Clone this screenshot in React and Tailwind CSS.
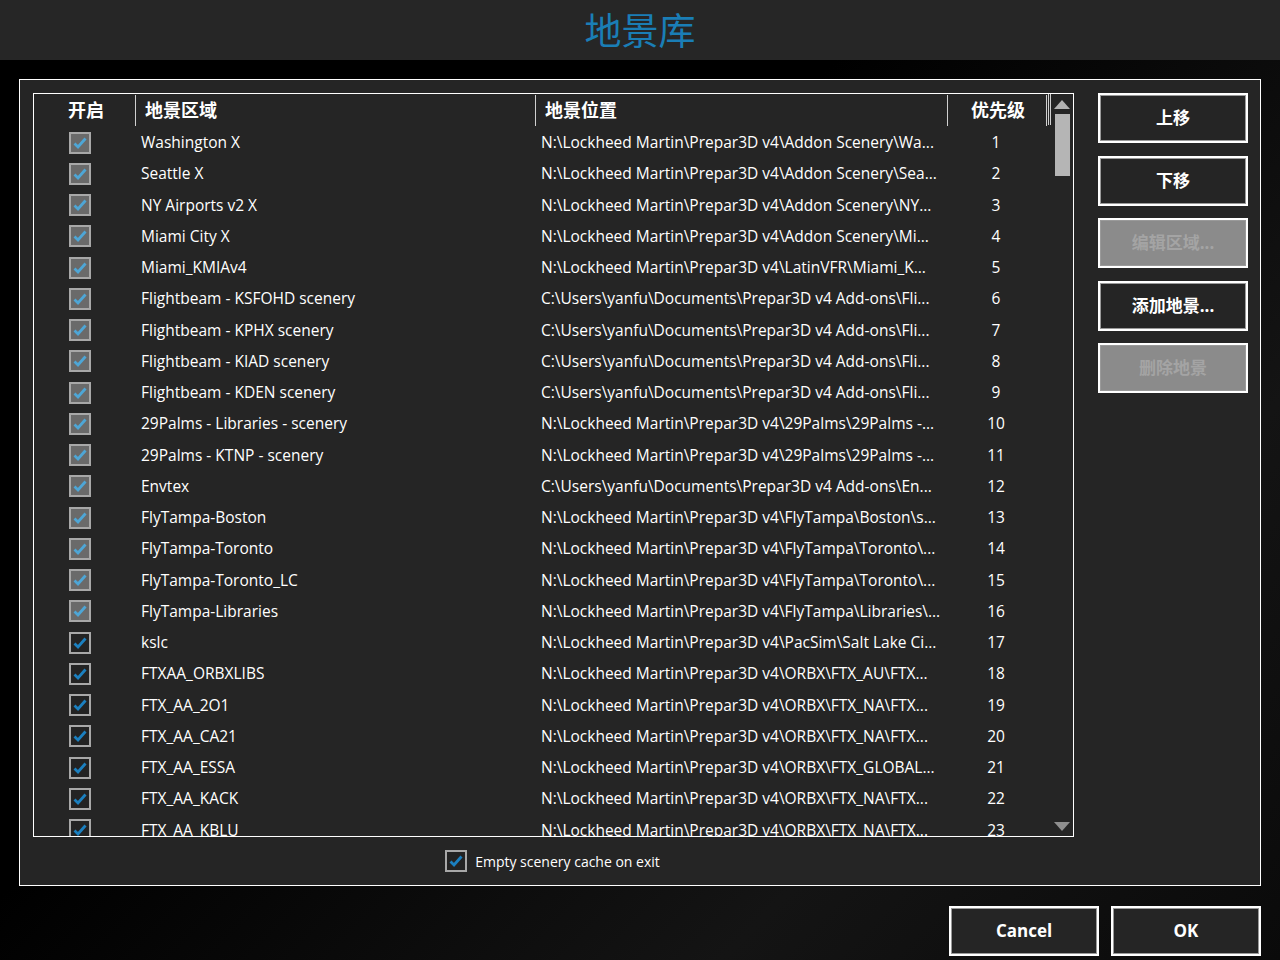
import React from "react";

const rows = [
  ["Washington X", "N:\\Lockheed Martin\\Prepar3D v4\\Addon Scenery\\Wa...", 1, false],
  ["Seattle X", "N:\\Lockheed Martin\\Prepar3D v4\\Addon Scenery\\Sea...", 2, false],
  ["NY Airports v2 X", "N:\\Lockheed Martin\\Prepar3D v4\\Addon Scenery\\NY...", 3, false],
  ["Miami City X", "N:\\Lockheed Martin\\Prepar3D v4\\Addon Scenery\\Mi...", 4, false],
  ["Miami_KMIAv4", "N:\\Lockheed Martin\\Prepar3D v4\\LatinVFR\\Miami_K...", 5, false],
  ["Flightbeam - KSFOHD scenery", "C:\\Users\\yanfu\\Documents\\Prepar3D v4 Add-ons\\Fli...", 6, false],
  ["Flightbeam - KPHX scenery", "C:\\Users\\yanfu\\Documents\\Prepar3D v4 Add-ons\\Fli...", 7, false],
  ["Flightbeam - KIAD scenery", "C:\\Users\\yanfu\\Documents\\Prepar3D v4 Add-ons\\Fli...", 8, false],
  ["Flightbeam - KDEN scenery", "C:\\Users\\yanfu\\Documents\\Prepar3D v4 Add-ons\\Fli...", 9, false],
  ["29Palms - Libraries - scenery", "N:\\Lockheed Martin\\Prepar3D v4\\29Palms\\29Palms -...", 10, false],
  ["29Palms - KTNP - scenery", "N:\\Lockheed Martin\\Prepar3D v4\\29Palms\\29Palms -...", 11, false],
  ["Envtex", "C:\\Users\\yanfu\\Documents\\Prepar3D v4 Add-ons\\En...", 12, false],
  ["FlyTampa-Boston", "N:\\Lockheed Martin\\Prepar3D v4\\FlyTampa\\Boston\\s...", 13, false],
  ["FlyTampa-Toronto", "N:\\Lockheed Martin\\Prepar3D v4\\FlyTampa\\Toronto\\...", 14, false],
  ["FlyTampa-Toronto_LC", "N:\\Lockheed Martin\\Prepar3D v4\\FlyTampa\\Toronto\\...", 15, false],
  ["FlyTampa-Libraries", "N:\\Lockheed Martin\\Prepar3D v4\\FlyTampa\\Libraries\\...", 16, false],
  ["kslc", "N:\\Lockheed Martin\\Prepar3D v4\\PacSim\\Salt Lake Ci...", 17, true],
  ["FTXAA_ORBXLIBS", "N:\\Lockheed Martin\\Prepar3D v4\\ORBX\\FTX_AU\\FTX...", 18, true],
  ["FTX_AA_2O1", "N:\\Lockheed Martin\\Prepar3D v4\\ORBX\\FTX_NA\\FTX...", 19, true],
  ["FTX_AA_CA21", "N:\\Lockheed Martin\\Prepar3D v4\\ORBX\\FTX_NA\\FTX...", 20, true],
  ["FTX_AA_ESSA", "N:\\Lockheed Martin\\Prepar3D v4\\ORBX\\FTX_GLOBAL...", 21, true],
  ["FTX_AA_KACK", "N:\\Lockheed Martin\\Prepar3D v4\\ORBX\\FTX_NA\\FTX...", 22, true],
  ["FTX_AA_KBLU", "N:\\Lockheed Martin\\Prepar3D v4\\ORBX\\FTX_NA\\FTX...", 23, true],
];

const font = { fontFamily: '"Open Sans", "Noto Sans CJK SC", sans-serif' };

function Check({ active }) {
  return (
    <div
      className={
        "w-[22px] h-[22px] border-2 border-[#a8a8a8] flex items-center justify-center " +
        (active ? "bg-[#232323]" : "bg-[#6a6a6a]")
      }
    >
      <svg width="16" height="16" viewBox="0 0 16 16">
        <path
          d="M2.5 8.5 L6 12 L13.5 3.5"
          fill="none"
          stroke={active ? "#1b80c0" : "#4ea6d6"}
          strokeWidth="2.8"
        />
      </svg>
    </div>
  );
}

function SideButton({ label, disabled }) {
  return (
    <div
      className={
        "w-[150px] h-[50px] border-2 border-white shadow-[inset_0_0_0_1px_#9a9a9a] flex items-center justify-center text-[17px] font-bold " +
        (disabled ? "bg-[#8b8b8b] text-[#a4a4a4]" : "bg-[#252525] text-white")
      }
    >
      {label}
    </div>
  );
}

export default function App() {
  return (
    <div
      className="w-[1280px] h-[960px] bg-black bg-[linear-gradient(135deg,#000_0%,#000_40%,#141414_75%,#0a0a0a_100%)] flex flex-col overflow-hidden"
      style={font}
    >
      {/* title bar */}
      <div className="h-[60px] bg-[#262626] flex items-center justify-center">
        <div className="text-[37px] text-[#1a7eb6] leading-none">地景库</div>
      </div>

      <div className="px-[19px] pt-[19px]">
        <div className="h-[807px] border border-white bg-[#252525] pl-[13px] pt-[13px] flex">
          <div className="flex flex-col">
            {/* table */}
            <div className="w-[1041px] h-[746px] border border-white flex overflow-hidden">
              <div className="w-[1014px] flex flex-col overflow-hidden">
                <div className="h-[33px] shrink-0 flex items-center text-white font-bold text-[18px]">
                  <div className="w-[102px] pl-[34px] border-r border-[#d0d0d0] h-[31px] flex items-center">开启</div>
                  <div className="w-[400px] pl-[9px] border-r border-[#d0d0d0] h-[31px] flex items-center">地景区域</div>
                  <div className="w-[412px] pl-[9px] border-r border-[#d0d0d0] h-[31px] flex items-center">地景位置</div>
                  <div className="w-[99px] h-[31px] flex items-center justify-center pl-[2px] border-r border-[#d0d0d0]">优先级</div>
                </div>
                {rows.map(([name, path, n, active]) => (
                  <div key={n} className="h-[31.25px] shrink-0 flex items-center text-white text-[15.5px]">
                    <div className="w-[103px] pl-[35px]">
                      <Check active={active} />
                    </div>
                    <div className="w-[400px] pl-[4px] whitespace-nowrap">{name}</div>
                    <div className="w-[412px] pl-[4px] whitespace-nowrap overflow-hidden">{path}</div>
                    <div className="w-[99px] text-center pr-[5px]">{n}</div>
                  </div>
                ))}
              </div>
              {/* scrollbar */}
              <div className="flex-1 flex">
                <div className="w-[3px] h-[31px] border-l border-r border-[#d0d0d0] shrink-0" />
                <div className="flex-1 flex flex-col items-center pt-[6px] pb-[5px]">
                  <svg width="16" height="9" viewBox="0 0 16 9">
                    <polygon points="0,9 16,9 8,0" fill="#b3b3b3" />
                  </svg>
                  <div className="w-[15px] h-[62px] bg-[#b5b5b5] mt-[5px]" />
                  <div className="flex-1" />
                  <svg width="16" height="9" viewBox="0 0 16 9">
                    <polygon points="0,0 16,0 8,9" fill="#8f8f8f" />
                  </svg>
                </div>
              </div>
            </div>
            {/* bottom checkbox */}
            <div className="h-[48px] flex items-center justify-center gap-[8px] text-white text-[14px] pr-[2px]">
              <Check active />
              <span>Empty scenery cache on exit</span>
            </div>
          </div>

          {/* side buttons */}
          <div className="ml-[24px] flex flex-col gap-[12.5px]">
            <SideButton label="上移" />
            <SideButton label="下移" />
            <SideButton label="编辑区域..." disabled />
            <SideButton label="添加地景..." />
            <SideButton label="删除地景" disabled />
          </div>
        </div>
      </div>

      <div className="flex justify-end gap-[12px] pr-[19px] pt-[20px]">
        <div className="w-[150px] h-[50px] border-2 border-white shadow-[inset_0_0_0_1px_#9a9a9a] bg-[#252525] text-white font-bold text-[17px] flex items-center justify-center">
          Cancel
        </div>
        <div className="w-[150px] h-[50px] border-2 border-white shadow-[inset_0_0_0_1px_#9a9a9a] bg-[#252525] text-white font-bold text-[17px] flex items-center justify-center">
          OK
        </div>
      </div>
    </div>
  );
}
